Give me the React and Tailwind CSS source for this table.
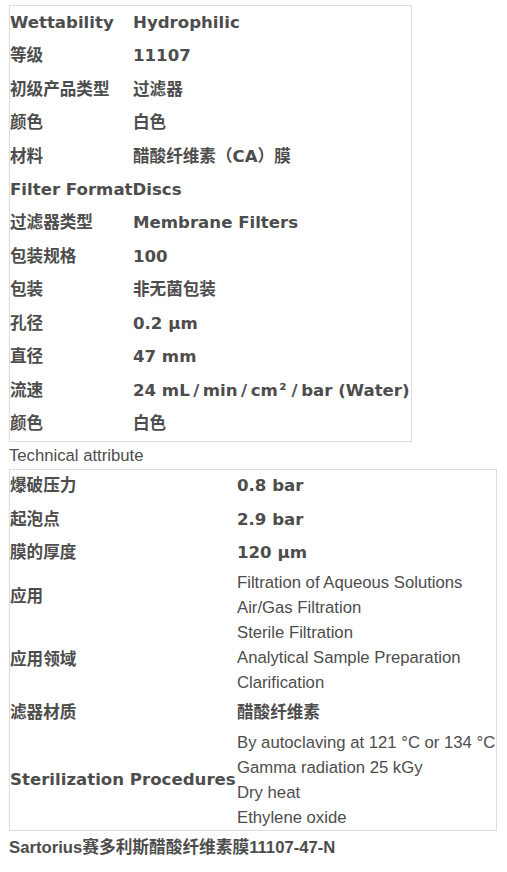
import React from "react";

const topRows = [
  ["Wettability", "Hydrophilic"],
  ["等级", "11107"],
  ["初级产品类型", "过滤器"],
  ["颜色", "白色"],
  ["材料", "醋酸纤维素（CA）膜"],
  ["Filter Format", "Discs"],
  ["过滤器类型", "Membrane Filters"],
  ["包装规格", "100"],
  ["包装", "非无菌包装"],
  ["孔径", "0.2 µm"],
  ["直径", "47 mm"],
  ["流速", "flow"],
  ["颜色", "白色"],
];

const App = () => {
  // BOLD / PLAIN TEXT STYLES
  const bold =
    "font-['DejaVu_Sans','Noto_Sans_CJK_SC',sans-serif] font-bold text-[16.6px] leading-[24px] text-[#4d4d4d]";
  const plain =
    "font-['Liberation_Sans','Noto_Sans_CJK_SC',sans-serif] text-[16.7px] leading-[25px] text-[#4d4d4d]";

  // flow rate value, slashes are wider in the reference font
  const flow = (
    <>
      24 mL<span className="px-[3.5px]">/</span>min<span className="px-[3.5px]">/</span>cm
      <span className="px-[1.5px]">²</span>
      <span className="px-[3.5px]">/</span>bar (Water)
    </>
  );

  return (
    <div className="bg-white min-h-[872px] w-[507px] pl-[9px] pt-[5px]">
      {/* FIRST TABLE */}
      <div className="w-[403px] border border-[#dddddd] flex flex-col overflow-hidden">
        {topRows.map(([label, value], i) =>
          label === "Filter Format" ? (
            <div key={i} className="h-[33.46px] flex items-center">
              <span className={`${bold} whitespace-nowrap`}>
                {label}
                {value}
              </span>
            </div>
          ) : (
            <div key={i} className="h-[33.46px] flex items-center">
              <div className={`${bold} w-[123px] shrink-0`}>{label}</div>
              <div className={`${bold} whitespace-nowrap`}>
                {value === "flow" ? flow : value}
              </div>
            </div>
          )
        )}
      </div>

      {/* CAPTION */}
      <div className={`${plain} h-[27px] leading-[27px]`}>Technical attribute</div>

      {/* SECOND TABLE */}
      <div className="w-[488px] border border-[#dddddd] flex flex-col">
        <div className="h-[33px] flex items-center">
          <div className={`${bold} w-[227px] shrink-0`}>爆破压力</div>
          <div className={bold}>0.8 bar</div>
        </div>
        <div className="h-[34px] flex items-center">
          <div className={`${bold} w-[227px] shrink-0`}>起泡点</div>
          <div className={bold}>2.9 bar</div>
        </div>
        <div className="h-[33px] flex items-center">
          <div className={`${bold} w-[227px] shrink-0`}>膜的厚度</div>
          <div className={bold}>120 µm</div>
        </div>
        <div className="h-[75px] flex">
          <div className={`${bold} w-[227px] shrink-0 pt-[15px]`}>应用</div>
          <div className={plain}>
            <div>Filtration of Aqueous Solutions</div>
            <div>Air/Gas Filtration</div>
            <div>Sterile Filtration</div>
          </div>
        </div>
        <div className="h-[51px] flex">
          <div className={`${bold} w-[227px] shrink-0 pt-[3px]`}>应用领域</div>
          <div className={plain}>
            <div>Analytical Sample Preparation</div>
            <div>Clarification</div>
          </div>
        </div>
        <div className="h-[34px] flex items-center">
          <div className={`${bold} w-[227px] shrink-0`}>滤器材质</div>
          <div className={bold}>醋酸纤维素</div>
        </div>
        <div className="h-[100px] flex items-center">
          <div className={`${bold} w-[227px] shrink-0 whitespace-nowrap`}>
            Sterilization Procedures
          </div>
          <div className={`${plain} whitespace-nowrap`}>
            <div>By autoclaving at 121 °C or 134 °C</div>
            <div>Gamma radiation 25 kGy</div>
            <div>Dry heat</div>
            <div>Ethylene oxide</div>
          </div>
        </div>
      </div>

      {/* FOOTER TITLE */}
      <div className="pt-[6px] font-['Liberation_Sans','Noto_Sans_CJK_SC',sans-serif] font-bold text-[16.7px] leading-[22px] text-[#4d4d4d]">
        Sartorius赛多利斯醋酸纤维素膜11107-47-N
      </div>
    </div>
  );
};

export default App;
